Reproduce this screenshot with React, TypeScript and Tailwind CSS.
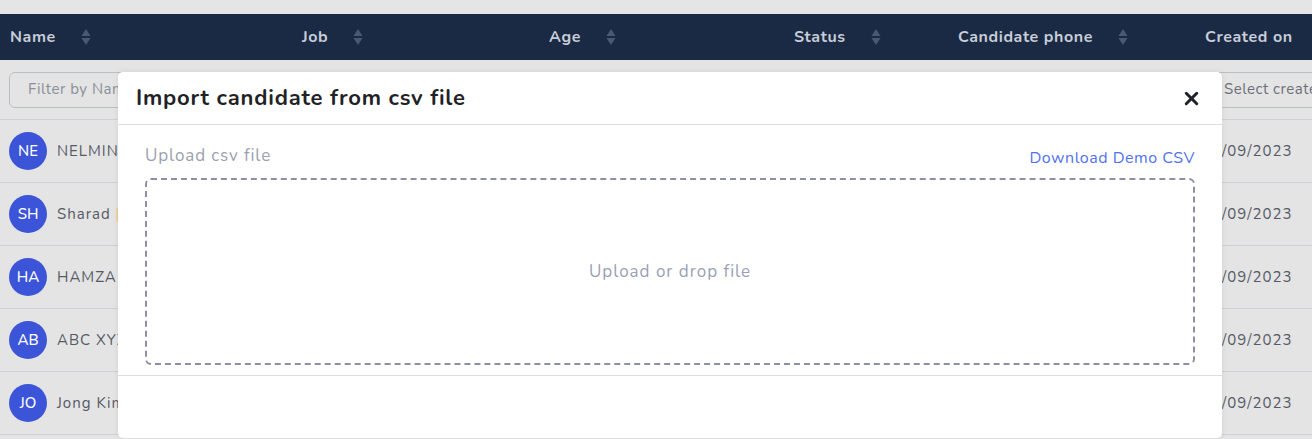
import { X } from "lucide-react";

const font = { fontFamily: "Nunito, 'Noto Sans', sans-serif" };

const rows = [
  { initials: "NE", name: "NELMINA ROSE", tag: "" },
  { initials: "SH", name: "Sharad", tag: "|" },
  { initials: "HA", name: "HAMZA ALI", tag: "" },
  { initials: "AB", name: "ABC XYZ", tag: "" },
  { initials: "JO", name: "Jong Kim", tag: "" },
];

function SortIcon() {
  return (
    <svg width="10" height="18" viewBox="0 0 10 18" className="shrink-0">
      <path d="M5 1 L9.5 8 L0.5 8 Z" fill="#4b5873" />
      <path d="M5 17 L9.5 10 L0.5 10 Z" fill="#4b5873" />
    </svg>
  );
}

function HeadCell({ label, className, sort = true }: { label: string; className: string; sort?: boolean }) {
  return (
    <div className={`flex items-center gap-[25px] shrink-0 ${className}`}>
      <span className="text-[16px] font-bold tracking-[0.6px] text-[#c8cdd7]">{label}</span>
      {sort && <SortIcon />}
    </div>
  );
}

export default function App() {
  return (
    <div className="relative w-[1312px] h-[439px] overflow-hidden bg-[#e4e4e4]" style={font}>
      <div className="h-[14px] bg-[#e5e5e5]" />

      {/* table header */}
      <div className="flex h-[46px] items-center bg-[#1a2a44]">
        <HeadCell label="Name" className="w-[292px] pl-[10px]" />
        <HeadCell label="Job" className="w-[247px] pl-[10px]" />
        <HeadCell label="Age" className="w-[245px] pl-[10px]" />
        <HeadCell label="Status" className="w-[164px] pl-[10px]" />
        <HeadCell label="Candidate phone" className="w-[247px] pl-[10px]" />
        <HeadCell label="Created on" className="flex-1 pl-[10px]" sort={false} />
      </div>

      {/* filters */}
      <div className="flex h-[60px] items-center justify-between border-b border-[#cfd0d6]">
        <div className="ml-[9px] flex h-[36px] w-[260px] items-center rounded-[6px] border border-[#b9bec8] pl-[18px] text-[15px] tracking-[0.5px] text-[#8a8f99]">
          Filter by Name
        </div>
        <div className="flex h-[36px] w-[114px] items-center border-y border-[#b9bec8] pl-[26px] text-[15px] tracking-[0.5px] text-[#6b6f78] whitespace-nowrap overflow-hidden">
          Select created date
        </div>
      </div>

      {/* rows */}
      {rows.map((r) => (
        <div key={r.initials} className="flex h-[63px] items-center border-b border-[#cfd0d6]">
          <div className="flex w-[1202px] items-center gap-[10px] pl-[9px]">
            <div className="flex h-[38px] w-[38px] items-center justify-center rounded-full bg-[#3c55d8] text-[15px] font-medium text-white">
              {r.initials}
            </div>
            <span className="text-[15px] tracking-[1px] text-[#555a64]">
              {r.name} {r.tag && <span className="text-[#f0c48a]">{r.tag}</span>}
            </span>
          </div>
          <span className="text-[15px] tracking-[1px] text-[#555a64]">12/09/2023</span>
        </div>
      ))}

      {/* modal */}
      <div className="absolute left-[118px] top-[72px] flex h-[366px] w-[1104px] flex-col rounded-[5px] bg-white shadow-[0_0_6px_rgba(0,0,0,0.08)]">
        <div className="flex h-[53px] shrink-0 items-center justify-between border-b border-[#dcdee2] pl-[18px] pr-[20px]">
          <h2 className="text-[22px] font-bold tracking-[0.8px] text-[#1f2226]">Import candidate from csv file</h2>
          <X size={21} strokeWidth={3.4} className="text-[#1f2226]" />
        </div>
        <div className="flex flex-col gap-[8px] border-b border-[#dcdee2] px-[27px] pb-[10px] pt-[17px]">
          <div className="flex items-end justify-between">
            <span className="text-[17px] tracking-[0.9px] text-[#9a9fb0] leading-[28px]">Upload csv file</span>
            <span className="text-[16px] tracking-[0.5px] text-[#5171ef]">Download Demo CSV</span>
          </div>
          <div className="flex h-[187px] items-center justify-center rounded-[6px] border-2 border-dashed border-[#8e8fa7]">
            <span className="text-[17px] tracking-[1px] text-[#9a9fb5]">Upload or drop file</span>
          </div>
        </div>
        <div className="flex-1" />
      </div>
    </div>
  );
}
